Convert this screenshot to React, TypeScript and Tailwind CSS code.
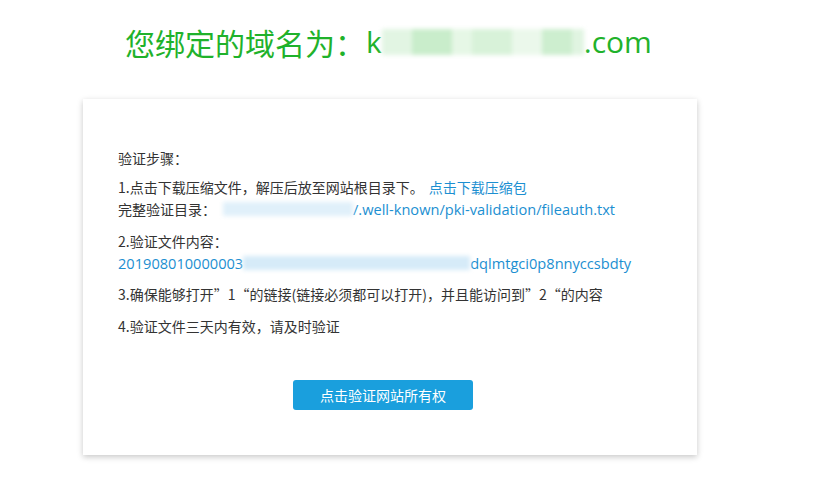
import React from "react";

const cjk = "font-['Microsoft_YaHei','Noto_Sans_CJK_SC',sans-serif]";
const latin = "font-['Open_Sans',sans-serif] text-[14.6px]";

const Blur = ({ w, h, color }: { w: number; h: number; color: string }) => (
  <span
    className="inline-block align-middle blur-[2px]"
    style={{ width: w, height: h, background: color }}
  />
);

const App: React.FC = () => {
  return (
    <div className={`w-[823px] h-[480px] bg-white ${cjk}`}>
      <h1 className="pl-[125px] pt-[20px] h-[99px] text-[30px] leading-[44px] text-[#1fb22b] flex items-start">
        <span>您绑定的域名为：</span>
        <span className="flex items-center h-[44px] ml-[1px]">
          <span className="font-['Open_Sans',sans-serif]">k</span>
          <span className="flex h-[26px] blur-[2px]">
            <span className="w-[30px] bg-[#e2f5e3]" />
            <span className="w-[40px] bg-[#c9edcb]" />
            <span className="w-[20px] bg-[#e6f7e6]" />
            <span className="w-[40px] bg-[#d8f2d9]" />
            <span className="w-[30px] bg-[#ebf8eb]" />
            <span className="w-[30px] bg-[#cdeecf]" />
            <span className="w-[12px] bg-[#e0f4e1]" />
          </span>
          <span className="font-['Open_Sans',sans-serif]">.com</span>
        </span>
      </h1>

      <div className="ml-[83px] w-[614px] h-[356px] bg-white shadow-[0_2px_6px_rgba(0,0,0,0.22)] pl-[35px] pt-[48px] text-[14px] text-[#333] leading-[22px]">
        <p>验证步骤：</p>
        <p className="mt-[7px]">
          1.点击下载压缩文件，解压后放至网站根目录下。
          <a className="ml-[5px] text-[#1c8fd1]">点击下载压缩包</a>
        </p>
        <p className="flex items-center">
          <span>完整验证目录：</span>
          <span className="ml-[7px] flex items-center">
            <Blur w={130} h={14} color="#e0f0fa" />
          </span>
          <span className={`text-[#1c8fd1] ${latin}`}>/.well-known/pki-validation/fileauth.txt</span>
        </p>
        <p className="mt-[10px]">2.验证文件内容：</p>
        <p className={`flex items-center text-[#1c8fd1] ${latin}`}>
          <span>201908010000003</span>
          <Blur w={227} h={14} color="#d6ebf8" />
          <span>dqlmtgci0p8nnyccsbdty</span>
        </p>
        <p className="mt-[9px]">3.确保能够打开”1“的链接(链接必须都可以打开)，并且能访问到”2“的内容</p>
        <p className="mt-[10px]">4.验证文件三天内有效，请及时验证</p>
        <div className="mt-[43px] pl-[175px]">
          <button className="w-[180px] h-[30px] rounded-[3px] bg-[#1a9fdd] text-white text-[14px]">
            点击验证网站所有权
          </button>
        </div>
      </div>
    </div>
  );
};

export default App;
